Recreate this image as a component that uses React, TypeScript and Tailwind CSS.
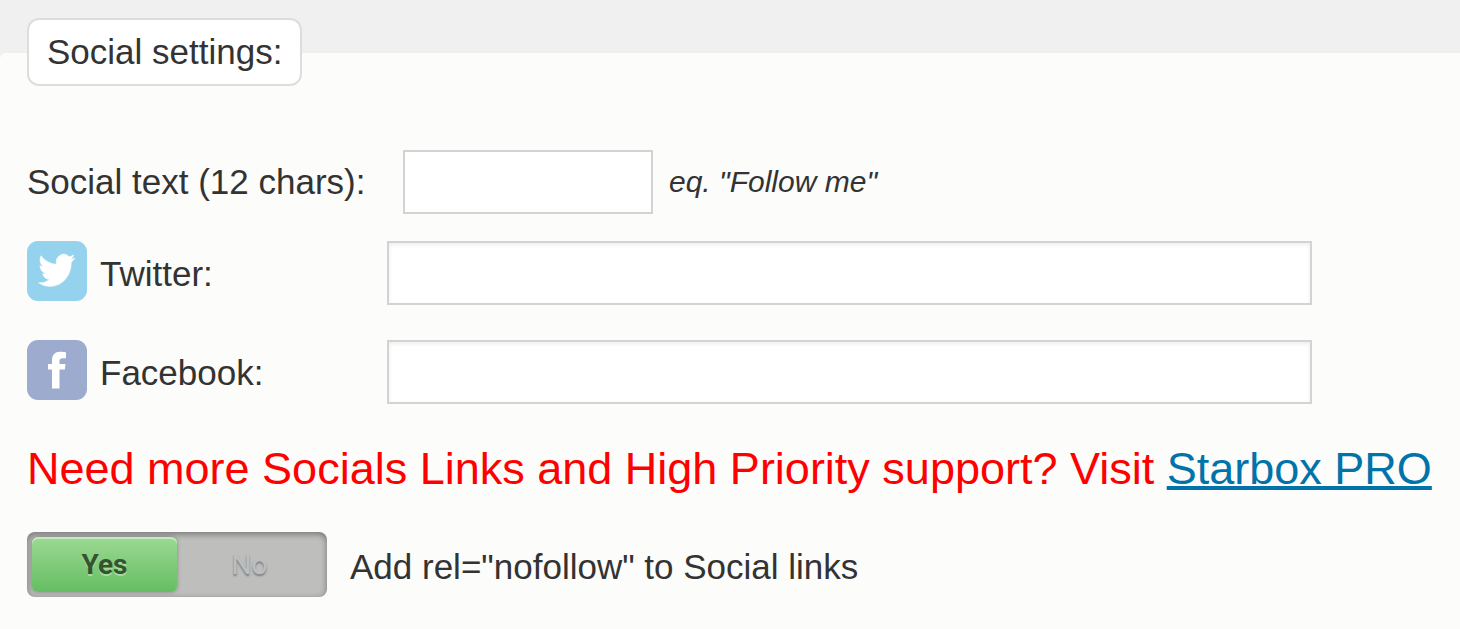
import { useState } from "react";

function TwitterIcon() {
  return (
    <svg viewBox="0 0 60 60" className="size-[60px] shrink-0" aria-hidden="true">
      <filter id="bird-soft">
        <feGaussianBlur stdDeviation="0.6" />
      </filter>
      <rect width="60" height="60" rx="11" fill="#94d2ee" />
      <g filter="url(#bird-soft)">
        <path
          transform="translate(11.5 9.5) scale(1.52 1.65)"
          fill="#ffffff"
          stroke="#ffffff"
          strokeWidth="0.3"
          d="M23.95 4.57a10 10 0 0 1-2.82.77 4.96 4.96 0 0 0 2.16-2.72c-.95.55-2 .96-3.13 1.18a4.92 4.92 0 0 0-8.38 4.48C7.69 8.1 4.07 6.13 1.64 3.16a4.82 4.82 0 0 0-.67 2.48c0 1.71.87 3.21 2.19 4.1a4.9 4.9 0 0 1-2.23-.62v.06a4.92 4.92 0 0 0 3.95 4.83 5 5 0 0 1-2.21.08 4.94 4.94 0 0 0 4.6 3.42A9.87 9.87 0 0 1 0 19.54a13.99 13.99 0 0 0 7.55 2.21c9.05 0 14-7.5 14-13.98 0-.21 0-.42-.02-.63a9.94 9.94 0 0 0 2.42-2.57z"
        />
      </g>
    </svg>
  );
}

function FacebookIcon() {
  return (
    <svg viewBox="0 0 60 60" className="size-[60px] shrink-0" aria-hidden="true">
      <filter id="f-soft">
        <feGaussianBlur stdDeviation="0.6" />
      </filter>
      <rect width="60" height="60" rx="11" fill="#9dabce" />
      <path
        filter="url(#f-soft)"
        fill="#ffffff"
        d="M25 48.5V29.5H21V24H25V20.500C25 14.800 28 11.800 33 11.800C35.500 11.800 37.500 12 39 12.400V18.200H36C33.300 18.200 32.500 19 32.500 21V24H38.500L37.800 29.500H32.500V48.500Z"
      />
    </svg>
  );
}

const wideInput =
  "h-16 min-w-0 grow border-2 border-[#d3d3d3] bg-white px-3 shadow-[inset_0_2px_4px_rgba(0,0,0,0.07)] outline-none";

export default function App() {
  const [nofollow, setNofollow] = useState(true);

  return (
    <main className="min-h-screen bg-[#f0f0f0] pt-[53px] font-['Liberation_Sans',Arial,sans-serif] text-[35px] leading-10 text-[#333333]">
      <form className="min-h-[calc(100vh-53px)] rounded-tl-md bg-[#fcfcfa] px-[27px] pb-8">
        <div className="flex">
          <h1 className="-mt-[35px] rounded-xl border-2 border-[#dddddd] bg-white px-[18px] py-3">
            Social settings:
          </h1>
        </div>

        <div className="mt-16 flex items-center">
          <label htmlFor="social-text" className="w-[376px] shrink-0">
            Social text (12 chars):
          </label>
          <input
            id="social-text"
            type="text"
            maxLength={12}
            className="h-16 w-[250px] border-2 border-[#d3d3d3] bg-white px-3 outline-none"
          />
          <span className="ml-4 text-[30px] italic">eq. "Follow me"</span>
        </div>

        <div className="mt-[27px] flex items-start pr-[121px]">
          <label htmlFor="twitter" className="flex w-[360px] shrink-0 items-center gap-[13px]">
            <TwitterIcon />
            <span className="pt-1.5">Twitter:</span>
          </label>
          <input id="twitter" type="text" className={wideInput} />
        </div>

        <div className="mt-[35px] flex items-start pr-[121px]">
          <label htmlFor="facebook" className="flex w-[360px] shrink-0 items-center gap-[13px]">
            <FacebookIcon />
            <span className="pt-1.5">Facebook:</span>
          </label>
          <input id="facebook" type="text" className={wideInput} />
        </div>

        <p className="mt-[39px] text-[45px] leading-[52px] text-[#ff0000]">
          Need more Socials Links and High Priority support? Visit{" "}
          <a href="#starbox-pro" className="text-[#0073aa] underline decoration-4">
            Starbox PRO
          </a>
        </p>

        <div className="mt-[37px] flex items-center gap-[23px]">
          <div
            role="radiogroup"
            aria-labelledby="nofollow-label"
            className="flex h-[65px] w-[300px] shrink-0 rounded-lg bg-[#bebebd] p-[5px] font-[Roboto,sans-serif] text-[28px] leading-8 shadow-[inset_0_2px_6px_rgba(0,0,0,0.4)]"
          >
            <label className="flex flex-1 cursor-pointer items-center justify-center rounded-md text-[#bebebd] [text-shadow:0_2px_2px_#777d86] has-checked:bg-linear-to-b has-checked:from-[#9bd992] has-checked:to-[#65bd63] has-checked:font-bold has-checked:text-[#36532f] has-checked:shadow-[inset_0_2px_0_#c5e9bf,0_0_4px_rgba(0,0,0,0.3)] has-checked:[text-shadow:0_2px_0_#a5dc9d]">
              <input
                type="radio"
                name="nofollow"
                className="sr-only"
                checked={nofollow}
                onChange={() => setNofollow(true)}
              />
              Yes
            </label>
            <label className="flex flex-1 cursor-pointer items-center justify-center rounded-md text-[#bebebd] [text-shadow:0_2px_2px_#777d86] has-checked:bg-linear-to-b has-checked:from-[#9bd992] has-checked:to-[#65bd63] has-checked:font-bold has-checked:text-[#36532f] has-checked:shadow-[inset_0_2px_0_#c5e9bf,0_0_4px_rgba(0,0,0,0.3)] has-checked:[text-shadow:0_2px_0_#a5dc9d]">
              <input
                type="radio"
                name="nofollow"
                className="sr-only"
                checked={!nofollow}
                onChange={() => setNofollow(false)}
              />
              No
            </label>
          </div>
          <span id="nofollow-label" className="pt-1">
            Add rel="nofollow" to Social links
          </span>
        </div>
      </form>
    </main>
  );
}
